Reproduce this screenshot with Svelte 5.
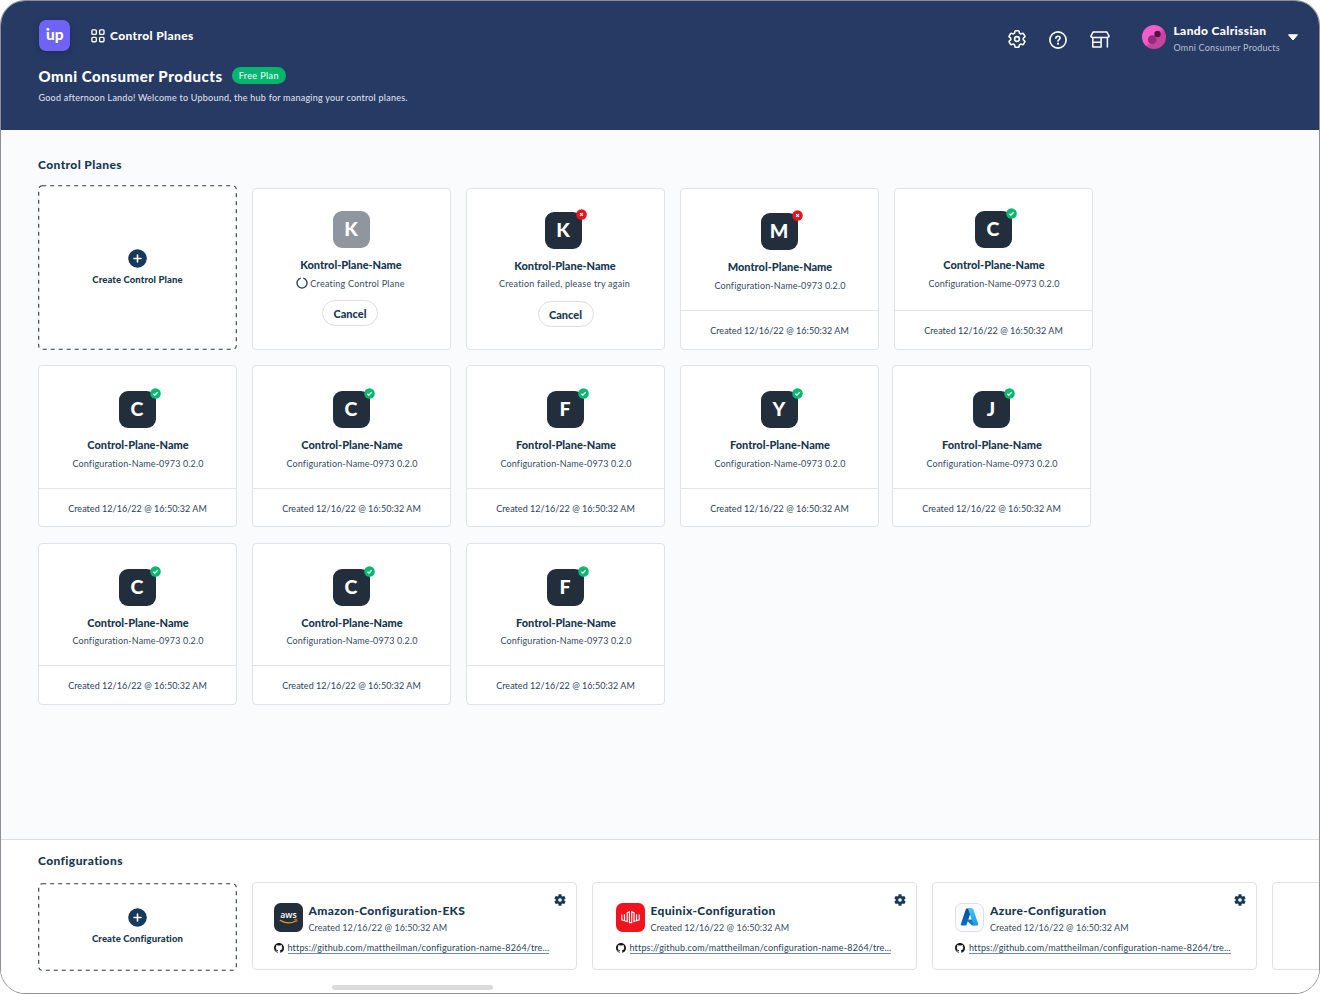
<script lang="ts">
	type Plane = {
		letter: string;
		name: string;
		status: 'pending' | 'failed' | 'error' | 'ready';
		note?: string;
		config?: string;
	};

	const config = 'Configuration-Name-0973 0.2.0';
	const created = 'Created 12/16/22 @ 16:50:32 AM';
	const repo = 'https://github.com/mattheilman/configuration-name-8264/tre...';

	const rows: Plane[][] = [
		[
			{ letter: 'K', name: 'Kontrol-Plane-Name', status: 'pending', note: 'Creating Control Plane' },
			{ letter: 'K', name: 'Kontrol-Plane-Name', status: 'failed', note: 'Creation failed, please try again' },
			{ letter: 'M', name: 'Montrol-Plane-Name', status: 'error', config },
			{ letter: 'C', name: 'Control-Plane-Name', status: 'ready', config }
		],
		[
			{ letter: 'C', name: 'Control-Plane-Name', status: 'ready', config },
			{ letter: 'C', name: 'Control-Plane-Name', status: 'ready', config },
			{ letter: 'F', name: 'Fontrol-Plane-Name', status: 'ready', config },
			{ letter: 'Y', name: 'Fontrol-Plane-Name', status: 'ready', config },
			{ letter: 'J', name: 'Fontrol-Plane-Name', status: 'ready', config }
		],
		[
			{ letter: 'C', name: 'Control-Plane-Name', status: 'ready', config },
			{ letter: 'C', name: 'Control-Plane-Name', status: 'ready', config },
			{ letter: 'F', name: 'Fontrol-Plane-Name', status: 'ready', config }
		]
	];

	const configurations = [
		{ name: 'Amazon-Configuration-EKS', provider: 'aws' },
		{ name: 'Equinix-Configuration', provider: 'equinix' },
		{ name: 'Azure-Configuration', provider: 'azure' }
	];
</script>

{#snippet createTile(label: string, kind: string, height: number)}
	<button class="create {kind}">
		<svg class="dashes" width="199" {height} aria-hidden="true">
			<rect x="0.7" y="0.7" width="197.6" height={height - 1.4} rx="3.5" />
		</svg>
		<span class="create-body">
			<svg class="plus" viewBox="0 0 19 19" aria-hidden="true">
				<circle cx="9.5" cy="9.5" r="9.3" fill="#17395a" />
				<path d="M9.5 6v7M6 9.5h7" stroke="#fff" stroke-width="1.6" stroke-linecap="round" />
			</svg>
			<span>{label}</span>
		</span>
	</button>
{/snippet}

<div class="frame">
	<header>
		<div class="intro">
			<div class="brand">
				<svg class="logo" viewBox="0 0 31 31" aria-label="Upbound">
					<rect width="31" height="31" rx="6.5" fill="#6d64f6" />
					<text x="7" y="20.2" textLength="17.6" lengthAdjust="spacingAndGlyphs">up</text>
					<circle cx="8.9" cy="9.2" r="1.5" fill="#fff" />
				</svg>
				<svg class="squares" viewBox="0 0 14 14" aria-hidden="true">
					<g fill="none" stroke="#fff" stroke-width="1.35">
						<rect x="0.9" y="0.9" width="4.4" height="4.4" rx="0.9" />
						<rect x="8.6" y="0.9" width="4.4" height="4.4" rx="0.9" />
						<rect x="0.9" y="8.3" width="4.4" height="4.4" rx="0.9" />
						<rect x="8.6" y="8.3" width="4.4" height="4.4" rx="0.9" />
					</g>
				</svg>
				<span class="crumb">Control Planes</span>
			</div>
			<div class="org">
				<h1>Omni Consumer Products</h1>
				<span class="plan">Free Plan</span>
			</div>
			<p>Good afternoon Lando! Welcome to Upbound, the hub for managing your control planes.</p>
		</div>

		<div class="actions">
			<svg class="cog" viewBox="0 0 24 24" aria-label="Settings">
				<g fill="none" stroke="#fff" stroke-width="1.7" stroke-linejoin="round">
					<path
						d="M9.594 3.94c.09-.542.56-.94 1.11-.94h2.593c.55 0 1.02.398 1.11.94l.213 1.281c.063.374.313.686.645.87.074.04.147.083.22.127.325.196.72.257 1.075.124l1.217-.456a1.125 1.125 0 0 1 1.37.49l1.296 2.247a1.125 1.125 0 0 1-.26 1.431l-1.003.827c-.293.241-.438.613-.43.992a7.723 7.723 0 0 1 0 .255c-.008.378.137.75.43.991l1.004.827c.424.35.534.955.26 1.43l-1.298 2.247a1.125 1.125 0 0 1-1.369.491l-1.217-.456c-.355-.133-.75-.072-1.076.124a6.47 6.47 0 0 1-.22.128c-.331.183-.581.495-.644.869l-.213 1.281c-.09.543-.56.94-1.11.94h-2.594c-.55 0-1.019-.398-1.11-.94l-.213-1.281c-.062-.374-.312-.686-.644-.87a6.52 6.52 0 0 1-.22-.127c-.325-.196-.72-.257-1.076-.124l-1.217.456a1.125 1.125 0 0 1-1.369-.49l-1.297-2.247a1.125 1.125 0 0 1 .26-1.431l1.004-.827c.292-.24.437-.613.43-.991a6.932 6.932 0 0 1 0-.255c.007-.38-.138-.751-.43-.992l-1.004-.827a1.125 1.125 0 0 1-.26-1.43l1.297-2.247a1.125 1.125 0 0 1 1.37-.491l1.216.456c.356.133.751.072 1.076-.124.072-.044.146-.086.22-.128.332-.183.582-.495.644-.869l.214-1.28Z"
					/>
					<circle cx="12" cy="12" r="2.6" />
				</g>
			</svg>
			<svg class="help" viewBox="0 0 18 18" aria-label="Help">
				<g fill="none" stroke="#fff" stroke-width="1.6" stroke-linecap="round">
					<circle cx="9" cy="9" r="8.1" />
					<path d="M6.9 7.2c0-1.2.9-2 2.1-2s2.1.7 2.1 1.9c0 1.3-2.1 1.6-2.1 3" />
				</g>
				<circle cx="9" cy="12.7" r="1.1" fill="#fff" />
			</svg>
			<svg class="store" viewBox="0 0 20 17" aria-label="Marketplace">
				<g fill="none" stroke="#fff" stroke-width="1.5" stroke-linejoin="round" stroke-linecap="round">
					<path d="M3.2.9h13.6l2.3 4.2c0 1-.7 1.3-1.6 1.3h-15C1.600 6.400.9 6.100.9 5.100z" />
					<path d="M2.8 6.5v9.6h8.3V6.5M2.8 11.200h8.300M17.400 6.500v9.600" />
				</g>
			</svg>
			<div class="user">
				<svg class="avatar" viewBox="0 0 24 24" aria-hidden="true">
					<defs>
						<linearGradient id="avatar-fill" x1="0" y1="0" x2="1" y2="1">
							<stop offset="0.45" stop-color="#f45cc8" />
							<stop offset="0.6" stop-color="#c544a0" />
						</linearGradient>
					</defs>
					<circle cx="12" cy="12" r="12" fill="url(#avatar-fill)" />
					<circle cx="10.200" cy="14.600" r="4.300" fill="#8f2d78" />
					<circle cx="15.500" cy="9" r="3.200" fill="#54113f" />
				</svg>
				<div class="who">
					<strong>Lando Calrissian</strong>
					<span>Omni Consumer Products</span>
				</div>
				<svg class="caret" viewBox="0 0 12 7" aria-hidden="true">
					<path d="M1.500.8h9L6 6z" fill="#fff" stroke="#fff" stroke-linejoin="round" />
				</svg>
			</div>
		</div>
	</header>

	<main>
		<h2>Control Planes</h2>
		{#each rows as row, r}
			<div class="row row-{r + 1}">
				{#if r === 0}
					{@render createTile('Create Control Plane', 'tall', 165)}
				{/if}
				{#each row as plane}
					<article class="card {plane.status}">
						<div class="card-body">
							<div class="tile">
								{plane.letter}
								{#if plane.status !== 'pending'}
									<svg class="badge" viewBox="0 0 11 11" aria-hidden="true">
										{#if plane.status === 'ready'}
											<circle cx="5.5" cy="5.5" r="5.3" fill="#06b971" />
											<path d="m3.4 5.7 1.5 1.4 2.7-2.9" fill="none" stroke="#fff" stroke-width="1.3" />
										{:else}
											<circle cx="5.5" cy="5.5" r="5.3" fill="#e8131f" />
											<path d="m4.1 4.1 2.8 2.8m0-2.8L4.1 6.900" stroke="#fff" stroke-width="1.3" />
										{/if}
									</svg>
								{/if}
							</div>
							<h3>{plane.name}</h3>
							{#if plane.config}
								<p>{plane.config}</p>
							{:else}
								<p class="note">
									{#if plane.status === 'pending'}
										<svg class="spinner" viewBox="0 0 12 12" aria-hidden="true">
											<path d="M7.300 1.200a5 5 0 1 1-2.600 0" fill="none" stroke="#24384f" stroke-width="1.300" />
										</svg>
									{/if}
									{plane.note}
								</p>
								<button class="cancel">Cancel</button>
							{/if}
						</div>
						{#if plane.config}
							<footer>{created}</footer>
						{/if}
					</article>
				{/each}
			</div>
		{/each}
	</main>

	<section>
		<h2>Configurations</h2>
		<div class="shelf">
			{@render createTile('Create Configuration', 'short', 88)}
			{#each configurations as item}
				<article class="config {item.provider}">
					<div class="top">
						{#if item.provider === 'aws'}
							<svg class="provider" viewBox="0 0 29 29" aria-label="AWS">
								<rect width="29" height="29" rx="6.5" fill="#222e3c" />
								<text class="aws-text" x="6.3" y="15" textLength="16.4" lengthAdjust="spacingAndGlyphs">aws</text>
								<g fill="none" stroke="#f49a1a" stroke-width="1.2" stroke-linecap="round">
									<path d="M6.200 17.300c4.800 3.400 11 3.400 15.400.7" />
									<path d="M20.800 16.500c1.200-.3 2-.2 2.100.1.200.5-.2 1.500-.7 2.200" stroke-width="0.9" />
								</g>
							</svg>
						{:else if item.provider === 'equinix'}
							<svg class="provider" viewBox="0 0 29 29" aria-label="Equinix">
								<rect width="29" height="29" rx="6.5" fill="#f1141f" />
								<path
									d="M5.800 11.500v5.300l2.700.9v-6.500M8.500 17.700l2.700.8V9.700l2.200-.8v10.700h2.300V8.900l2.300.8v8.800l2.500-.8v-6.500M20.500 17.700l2.700-.9v-5.300"
									fill="none"
									stroke="#fff"
									stroke-width="1.15"
								/>
							</svg>
						{:else}
							<svg class="provider" viewBox="0 0 29 29" aria-label="Azure">
								<defs>
									<linearGradient id="azure-left" x1="0.6" y1="0" x2="0.3" y2="1">
										<stop offset="0" stop-color="#114a8b" />
										<stop offset="1" stop-color="#0a6bd0" />
									</linearGradient>
									<linearGradient id="azure-right" x1="0.4" y1="0" x2="0.6" y2="1">
										<stop offset="0" stop-color="#3ccbf4" />
										<stop offset="1" stop-color="#2892df" />
									</linearGradient>
								</defs>
								<rect x="0.5" y="0.5" width="28" height="28" rx="6.5" fill="#fafafb" stroke="#dcdfe3" />
								<path d="M11.800 5.500h5.200L11.600 21.700a1 1 0 0 1-.9.700H6.600a.9.900 0 0 1-.8-1.200l5.100-15.100a1 1 0 0 1 .9-.6z" fill="url(#azure-left)" />
								<path d="M19 16.600h-8.200l5.900 5.600h3.800z" fill="#0b75d4" />
								<path d="M17.200 5.500h-5c.4 0 .8.300.9.600l5.100 15.100c.2.600-.2 1.200-.8 1.200h5c.6 0 1.100-.6.900-1.200L18.200 6.100a1 1 0 0 0-1-.6z" fill="url(#azure-right)" />
							</svg>
						{/if}
						<div class="about">
							<h3>{item.name}</h3>
							<p>{created}</p>
						</div>
						<svg class="gear" viewBox="2 2 20 20" aria-label="Configure">
							<path
								fill="#17395a"
								d="M19.14 12.94c.04-.3.06-.61.06-.94 0-.32-.02-.64-.07-.94l2.03-1.58c.18-.14.23-.41.12-.61l-1.92-3.32c-.12-.22-.37-.29-.59-.22l-2.39.96c-.5-.38-1.03-.7-1.62-.94l-.36-2.54c-.04-.24-.24-.41-.48-.41h-3.84c-.24 0-.43.17-.47.41l-.36 2.54c-.59.24-1.13.57-1.62.94l-2.39-.96c-.22-.08-.47 0-.59.22L2.740 8.870c-.12.210-.08.470.12.610l2.030 1.580c-.05.3-.09.63-.09.94s.02.64.07.94l-2.030 1.580c-.18.14-.23.41-.12.61l1.920 3.320c.12.22.37.29.59.22l2.390-.96c.5.38 1.030.7 1.620.94l.36 2.540c.05.24.24.41.48.41h3.840c.24 0 .44-.17.47-.41l.36-2.540c.59-.24 1.130-.56 1.620-.94l2.390.96c.22.08.47 0 .59-.22l1.920-3.320c.12-.22.07-.47-.12-.61l-2.010-1.580z"
							/>
							<circle cx="12" cy="12" r="3" fill="#fff" />
						</svg>
					</div>
					<div class="repo">
						<svg class="github" viewBox="0 0 16 16" aria-hidden="true">
							<path
								fill="#15191f"
								d="M8 0C3.58 0 0 3.58 0 8c0 3.540 2.290 6.530 5.470 7.590.4.070.55-.17.55-.38 0-.19-.01-.82-.01-1.490-2.010.37-2.530-.49-2.690-.94-.09-.23-.48-.94-.82-1.130-.28-.15-.68-.52-.01-.53.63-.01 1.080.58 1.230.82.72 1.210 1.870.87 2.330.66.07-.52.28-.87.51-1.070-1.780-.2-3.640-.89-3.640-3.950 0-.87.31-1.590.82-2.150-.08-.2-.36-1.020.08-2.120 0 0 .67-.21 2.200.82.64-.18 1.320-.27 2-.27s1.360.09 2 .27c1.530-1.040 2.200-.82 2.200-.82.44 1.100.16 1.920.08 2.120.51.56.82 1.270.82 2.150 0 3.070-1.870 3.750-3.650 3.950.29.25.54.73.54 1.480 0 1.070-.01 1.930-.01 2.200 0 .21.15.46.55.38A8.010 8.010 0 0 0 16 8c0-4.420-3.580-8-8-8z"
							/>
						</svg>
						<a href="#repo">{repo}</a>
					</div>
				</article>
			{/each}
			<article class="config"></article>
		</div>
		<div class="scrollbar"></div>
	</section>
</div>

<style>
	:global(body) {
		background: #fff;
	}

	.frame {
		display: flex;
		flex-direction: column;
		box-sizing: border-box;
		width: 1320px;
		height: 994px;
		border: 1px solid #8d8f95;
		border-radius: 25px;
		overflow: hidden;
		background: #fafbfd;
		color: #193750;
		font-family: Lato, sans-serif;
	}

	h1,
	h2,
	h3,
	p {
		margin: 0;
	}

	button {
		padding: 0;
		font: inherit;
		color: inherit;
	}

	svg {
		display: block;
		flex-shrink: 0;
	}

	header {
		display: flex;
		justify-content: space-between;
		box-sizing: border-box;
		height: 129px;
		padding: 19px 20.5px 0 37.5px;
		background: #273a64;
		color: #fff;
	}

	.brand {
		display: flex;
		align-items: center;
		height: 31px;
	}

	.logo {
		width: 31px;
		height: 31px;
		border-radius: 6.5px;
		box-shadow: 0 2px 6px rgb(20 25 60 / 35%);
	}

	.logo text {
		font-size: 15px;
		font-weight: 900;
		fill: #fff;
	}

	.squares {
		width: 14px;
		height: 14px;
		margin: 1px 5px 0 21.5px;
	}

	.crumb {
		font-size: 12px;
		font-weight: 900;
		letter-spacing: 0.38px;
	}

	.org {
		display: flex;
		align-items: center;
		gap: 9px;
		height: 20px;
		margin-top: 14.5px;
	}

	h1 {
		font-size: 15px;
		font-weight: 900;
		line-height: 20px;
		letter-spacing: 0.54px;
	}

	.plan {
		width: 54px;
		height: 17px;
		border-radius: 9px;
		background: #05b76e;
		font-size: 9px;
		line-height: 18px;
		letter-spacing: 0.4px;
		text-align: center;
	}

	.intro p {
		margin-top: 5.5px;
		font-size: 9px;
		line-height: 14px;
		letter-spacing: 0.24px;
		color: #e3e7ee;
	}

	.actions {
		display: flex;
		align-items: flex-start;
	}

	.cog {
		width: 22px;
		height: 22px;
		margin: 8px 20.5px 0 0;
	}

	.help {
		width: 18px;
		height: 18px;
		margin: 10.5px 23px 0 0;
	}

	.store {
		width: 20px;
		height: 17px;
		margin: 10.5px 32px 0 0;
	}

	.user {
		display: flex;
	}

	.avatar {
		width: 24px;
		height: 24px;
		margin: 5px 8px 0 0;
	}

	.who {
		display: flex;
		flex-direction: column;
		width: 113px;
		margin-top: 3px;
	}

	.who strong {
		font-size: 12px;
		font-weight: 900;
		line-height: 16px;
		letter-spacing: 0.36px;
	}

	.who span {
		font-size: 9px;
		line-height: 18px;
		letter-spacing: 0.22px;
		color: #b6c0d2;
		white-space: nowrap;
	}

	.caret {
		width: 12px;
		height: 7px;
		margin-top: 14px;
	}

	main {
		flex: 1;
		padding: 27px 0 0 37px;
	}

	h2 {
		font-size: 12px;
		font-weight: 900;
		line-height: 16px;
		letter-spacing: 0.4px;
	}

	.row {
		display: flex;
		align-items: flex-end;
		gap: 15px;
	}

	.row-1 {
		margin-top: 12px;
	}

	.row-2 {
		margin-top: 15px;
	}

	.row-3 {
		margin-top: 16px;
	}

	.row-2 .card:last-child {
		margin-left: -2px;
	}

	.create {
		display: grid;
		flex-shrink: 0;
		width: 199px;
		border: 0;
		background: none;
		font-size: 9.5px;
		font-weight: 900;
		letter-spacing: 0.1px;
	}

	.dashes,
	.create-body {
		grid-area: 1 / 1;
	}

	.dashes rect {
		fill: #fff;
		stroke: #2f3843;
		stroke-width: 1.1;
		stroke-dasharray: 4 4;
	}

	.create-body {
		z-index: 1;
		display: flex;
		flex-direction: column;
		align-items: center;
		line-height: 14px;
	}

	.tall .create-body {
		padding-top: 64px;
	}

	.short .create-body {
		padding-top: 25px;
	}

	.plus {
		width: 19px;
		height: 19px;
		margin-bottom: 5px;
	}

	.card {
		display: flex;
		flex-direction: column;
		box-sizing: border-box;
		width: 199px;
		height: 162px;
		border: 1px solid #dfe3e6;
		border-radius: 4px;
		background: #fff;
	}

	.card-body {
		display: flex;
		flex: 1;
		flex-direction: column;
		align-items: center;
		padding-top: 25px;
	}

	.row-1 .card-body {
		padding-top: 22px;
	}

	.row-1 .failed .card-body {
		padding-top: 23px;
	}

	.row-1 .error .card-body {
		padding-top: 24px;
	}

	.tile {
		position: relative;
		box-sizing: border-box;
		width: 37px;
		height: 37px;
		padding-right: 1px;
		border-radius: 9px;
		background: #222e3c;
		color: #fff;
		font-size: 19.5px;
		font-weight: 900;
		line-height: 36px;
		text-align: center;
	}

	.pending .tile {
		background: #90969d;
	}

	.failed .tile {
		margin-right: 4px;
	}

	.badge {
		position: absolute;
		top: -3px;
		right: -5px;
		width: 11px;
		height: 11px;
	}

	.card h3 {
		margin-top: 9px;
		padding-left: 1px;
		font-size: 11px;
		font-weight: 900;
		line-height: 16px;
		letter-spacing: -0.03px;
	}

	.pending h3,
	.failed h3 {
		padding: 0 1px 0 0;
	}

	.card p {
		display: flex;
		align-items: center;
		gap: 2px;
		margin-top: 3px;
		padding-left: 1px;
		font-size: 9px;
		line-height: 16px;
		letter-spacing: 0.13px;
		color: #364b60;
	}

	.card p.note {
		padding: 0 2px 0 0;
		letter-spacing: 0.23px;
	}

	.row-3 .card p,
	.failed p.note {
		margin-top: 2px;
	}

	.spinner {
		width: 12px;
		height: 12px;
		margin-top: -2px;
	}

	.cancel {
		width: 56px;
		height: 26px;
		margin-top: 8px;
		border: 1px solid #dcdee1;
		border-radius: 13px;
		background: #fff;
		font-size: 11px;
		font-weight: 900;
		line-height: 26px;
	}

	.failed .cancel {
		margin-top: 9px;
	}

	.pending .cancel {
		margin-right: 3px;
	}

	.card footer {
		height: 38px;
		border-top: 1px solid #e3e6e9;
		font-size: 9px;
		line-height: 40px;
		letter-spacing: 0.04px;
		text-align: center;
		color: #2b4258;
	}

	.row-2 footer {
		height: 37px;
	}

	section {
		height: 154px;
		box-sizing: border-box;
		padding: 13px 0 0 37px;
		border-top: 1px solid #dadde1;
		background: #fff;
	}

	.shelf {
		display: flex;
		gap: 15px;
		margin-top: 13px;
	}

	.short {
		margin-top: 1px;
	}

	.config {
		flex-shrink: 0;
		box-sizing: border-box;
		width: 325px;
		height: 88px;
		padding: 0 10.5px 0 20.5px;
		border: 1px solid #dfe2e5;
		border-radius: 4px;
		background: #fff;
	}

	.equinix,
	.azure {
		padding-left: 22.5px;
	}

	.azure {
		padding-left: 22px;
	}

	.top {
		display: flex;
		height: 55px;
	}

	.provider {
		width: 29px;
		height: 29px;
		margin: 20px 6px 0 0;
	}

	.aws-text {
		font-family: 'Open Sans', sans-serif;
		font-size: 9px;
		font-weight: 600;
		fill: #fff;
	}

	.about {
		flex: 1;
		padding-top: 20px;
	}

	.config h3 {
		font-size: 12px;
		font-weight: 900;
		line-height: 16px;
		letter-spacing: 0.34px;
	}

	.config p {
		margin-top: 1px;
		font-size: 9px;
		line-height: 16px;
		letter-spacing: 0.04px;
		color: #364b60;
	}

	.gear {
		width: 12px;
		height: 12px;
		margin-top: 11px;
	}

	.repo {
		display: flex;
		align-items: center;
		gap: 4px;
		height: 20px;
	}

	.github {
		width: 10px;
		height: 10px;
	}

	.repo a {
		border-bottom: 1px solid #6f8ba5;
		font-size: 9px;
		line-height: 11px;
		letter-spacing: 0.16px;
		color: #2b4258;
		text-decoration: none;
		white-space: nowrap;
	}

	.scrollbar {
		width: 161px;
		height: 5px;
		margin: 14px 0 0 294px;
		border-radius: 2.5px;
		background: #dbdbdc;
	}
</style>
